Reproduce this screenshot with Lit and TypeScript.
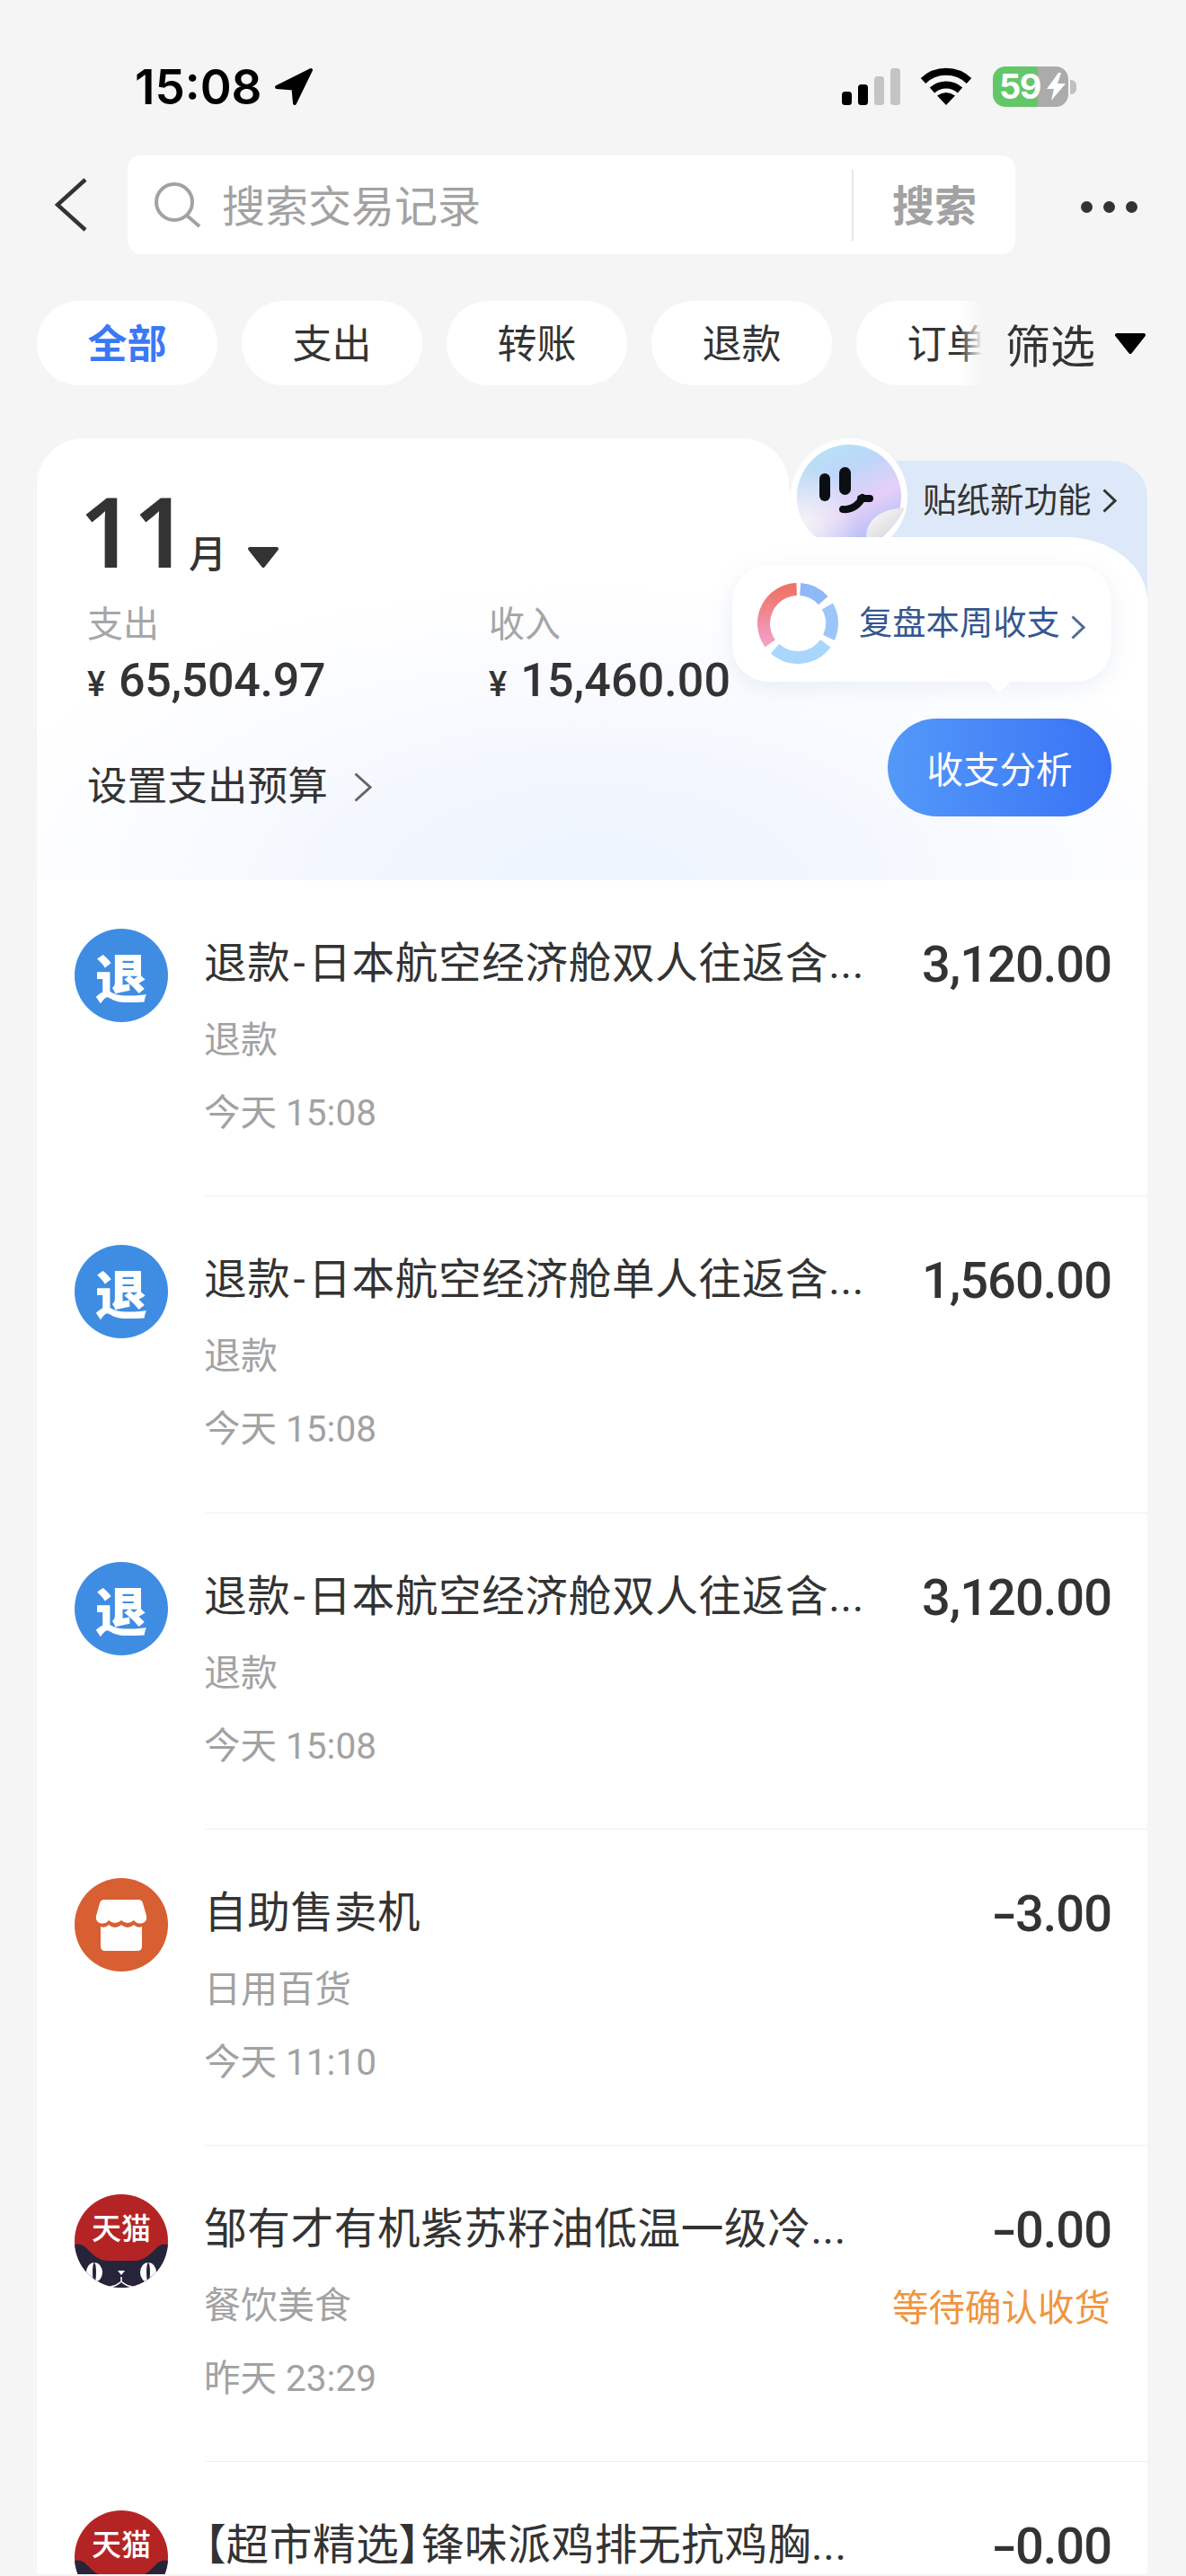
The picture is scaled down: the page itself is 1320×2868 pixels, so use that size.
import { LitElement, html, css, svg } from "lit";
import { customElement } from "lit/decorators.js";

type Row = { icon: "refund" | "store" | "tmall"; title: string; sub: string; time: string; amount: string; status?: string };

const ROWS: Row[] = [
  { icon: "refund", title: "退款-日本航空经济舱双人往返含...", sub: "退款", time: "今天 15:08", amount: "3,120.00" },
  { icon: "refund", title: "退款-日本航空经济舱单人往返含...", sub: "退款", time: "今天 15:08", amount: "1,560.00" },
  { icon: "refund", title: "退款-日本航空经济舱双人往返含...", sub: "退款", time: "今天 15:08", amount: "3,120.00" },
  { icon: "store", title: "自助售卖机", sub: "日用百货", time: "今天 11:10", amount: "-3.00" },
  { icon: "tmall", title: "邹有才有机紫苏籽油低温一级冷...", sub: "餐饮美食", time: "昨天 23:29", amount: "-0.00", status: "等待确认收货" },
  { icon: "tmall", title: "【超市精选】锋味派鸡排无抗鸡胸...", sub: "餐饮美食", time: "昨天 23:29", amount: "-0.00" },
];

const CHIPS = ["全部", "支出", "转账", "退款", "订单"];

function arc(cx: number, cy: number, r: number, a0: number, a1: number) {
  const p = (a: number) => {
    const t = ((a - 90) * Math.PI) / 180;
    return `${(cx + r * Math.cos(t)).toFixed(2)} ${(cy + r * Math.sin(t)).toFixed(2)}`;
  };
  const large = Math.abs(a1 - a0) > 180 ? 1 : 0;
  return `M${p(a0)} A${r} ${r} 0 ${large} 1 ${p(a1)}`;
}

const chev = (w: number, h: number, cls: string) => html`<svg class=${cls} width=${w} height=${h} viewBox="0 0 ${w} ${h}" fill="none"><path d="M1.5 1.5 L${w - 2} ${h / 2} L1.5 ${h - 1.5}" stroke="currentColor" stroke-width="3"/></svg>`;

const withDash = (t: string) => {
  const i = t.indexOf("-");
  if (i < 0) return t;
  return html`${t.slice(0, i)}<span class="dash">-</span>${t.slice(i + 1)}`;
};

@customElement("app-root")
export class AppRoot extends LitElement {
  static styles = css`
    :host { display: block; width: 1320px; height: 2868px; overflow: hidden; background: #f5f5f5; font-family: Roboto, "Noto Sans CJK SC", sans-serif; color: #333; }
    .status { height: 173px; padding: 0 122px 0 150px; box-sizing: border-box; display: flex; justify-content: space-between; align-items: flex-start; }
    .st-left { display: flex; margin-top: 74px; height: 46px; align-items: center; gap: 13px; }
    .time { font: 600 53px/46px Inter, sans-serif; color: #000; }
    .st-right { display: flex; margin-top: 74px; align-items: flex-start; }
    .signal { display: flex; align-items: flex-end; gap: 7px; height: 43px; margin-right: 22px; }
    .bar { width: 11px; border-radius: 3.5px; background: #000; }
    .bar.b1 { height: 15px; } .bar.b2 { height: 23px; }
    .bar.b3 { height: 32px; background: #c4c4c4; } .bar.b4 { height: 41px; background: #c4c4c4; }
    .wifi { margin: 1px 23px 0 0; display: block; }
    .battery { position: relative; width: 84px; height: 45px; border-radius: 14px; background: linear-gradient(to right, #63c76a 0 50px, #ababab 50px); display: flex; align-items: center; padding-left: 7px; box-sizing: border-box; color: #fff; font: 700 38px/45px Inter, sans-serif; letter-spacing: -1.5px; }
    .battery .bolt { position: absolute; left: 59px; top: 7px; }
    .nub { width: 7px; height: 16px; margin: 15px 0 0 2px; background: #c0c0c0; border-radius: 0 6px 6px 0; }

    .searchrow { display: flex; align-items: center; height: 110px; }
    .back { width: 142px; flex: none; padding-left: 61px; box-sizing: border-box; color: #333; display: flex; }
    .box { width: 988px; height: 110px; background: #fff; border-radius: 15px; display: flex; align-items: center; position: relative; }
    .sicon { margin-left: 30px; flex: none; }
    .ph { margin-left: 23px; padding-top: 5px; font-size: 48px; line-height: 48px; color: #a2a2a2; flex: 1; }
    .sep { width: 2px; height: 79px; background: #e6e6e6; }
    .sbtn { width: 180px; padding-top: 3px; text-align: center; font-size: 47px; line-height: 48px; font-weight: 700; color: #a2a2a2; }
    .dots { display: flex; gap: 12px; margin-left: 73px; margin-top: 4px; }
    .dots i { width: 13px; height: 13px; border-radius: 50%; background: #333; }

    .chips { position: relative; display: flex; gap: 27px; margin-top: 52px; height: 94px; padding-left: 41px; overflow: hidden; }
    .chip { flex: none; width: 201px; height: 94px; padding-bottom: 5px; box-sizing: border-box; border-radius: 47px; background: #fff; display: flex; align-items: center; justify-content: center; font-size: 44px; color: #333; }
    .chip.on { color: #3b78f6; font-weight: 700; }
    .filter { position: absolute; right: 0; top: 0; bottom: 0; width: 252px; background: linear-gradient(to right, rgba(245,245,245,0), #f5f5f5 25px); display: flex; align-items: center; box-sizing: border-box; padding-left: 51px; font-size: 50px; color: #333; }
    .filter svg { margin-left: 21px; }

    .panel { position: relative; margin: 59px 43px 0 41px; height: 2378px; overflow: hidden; background: transparent; }
    .summary { position: relative; height: 492px; }
    .tab { position: absolute; left: 900px; top: 25px; width: 336px; height: 200px; background: #dde9f9; border-radius: 0 40px 0 0; }
    .shape { position: absolute; inset: 0; display: block; }
    .sticker { position: absolute; left: 838px; top: -1px; display: block; }
    .tablabel { position: absolute; left: 986px; top: 50px; display: flex; align-items: center; font-size: 37.5px; line-height: 38px; color: #333; white-space: nowrap; }
    .tablabel svg { margin-left: 12px; color: #333; }
    .body { position: relative; padding: 54px 40px 0 56px; }
    .month { display: flex; align-items: baseline; height: 108px; }
    .mnum { font-family: "Noto Sans", sans-serif; font-size: 108px; line-height: 108px; font-weight: 600; color: #333; letter-spacing: -1.8px; margin: -5px 0 0 -9px; }
    .munit { font-size: 42px; line-height: 42px; font-weight: 500; margin-left: 2px; }
    .month svg { margin-left: 23px; align-self: flex-end; margin-bottom: 17px; }
    .stats { display: flex; margin-top: 26px; }
    .stat { width: 447px; }
    .lbl { font-size: 40px; line-height: 40px; color: #a6a6a6; }
    .val { margin-top: 16px; display: flex; align-items: baseline; height: 52px; font-size: 52px; line-height: 52px; font-weight: 500; color: #333; letter-spacing: -.3px; }
    .val.wide { letter-spacing: .1px; }
    .yen { font-size: 38px; line-height: 38px; font-weight: 500; margin-right: 15px; }
    .actions { display: flex; justify-content: space-between; margin-top: 16px; }
    .budget { display: flex; align-items: center; margin-top: 54px; height: 44px; font-size: 44.4px; line-height: 44px; letter-spacing: .3px; color: #333; }
    .budget svg { margin-left: 29px; color: #666; }
    .btn { width: 249px; height: 109px; border-radius: 55px; background: linear-gradient(to right, #5499f9, #3973f5); color: #fff; display: flex; align-items: center; justify-content: center; font-size: 40.5px; }
    .tip { position: absolute; left: 774px; top: 141px; width: 422px; height: 130px; background: #fff; border-radius: 40px; box-shadow: 0 6px 26px rgba(90,120,170,.12); display: flex; align-items: center; box-sizing: border-box; padding-left: 28px; color: #35568f; font-size: 37.3px; white-space: nowrap; }
    .tip .donut { flex: none; }
    .tip .ttxt { margin-left: 23px; line-height: 38px; }
    .tip .tchev { margin-left: 12px; color: #4f6b9c; position: relative; top: 4px; }
    .caret { position: absolute; left: 286px; top: 116px; width: 22px; height: 22px; background: #fff; transform: rotate(45deg); border-radius: 0 0 4px 0; }

    .list { background: #fff; }
    .row { display: flex; height: 352.3px; box-sizing: border-box; }
    .ic { flex: none; width: 104px; height: 104px; margin: 54px 42px 0 42px; border-radius: 50%; display: flex; align-items: center; justify-content: center; position: relative; overflow: hidden; }
    .ic.refund { background: #3f8de3; color: #fff; font-size: 58px; font-weight: 900; font-family: "Noto Sans CJK SC", sans-serif; line-height: 58px; }
    .ic.store { background: #d85f32; }
    .ic.tmall svg, .ic.store svg { display: block; }
    .main { flex: 1; display: flex; justify-content: space-between; border-bottom: 1.5px solid #f0f0f2; padding-right: 40px; min-width: 0; }
    .row:last-child .main { border-bottom: none; }
    .left { padding-top: 69px; margin-left: -2px; min-width: 0; }
    .title { font-size: 47.6px; line-height: 48px; letter-spacing: .65px; color: #333; white-space: nowrap; font-feature-settings: "palt"; }
    .dash { margin: 0 3px; }
    .sub { margin-top: 41px; font-size: 41px; line-height: 40px; color: #a2a2a2; }
    .when { margin-top: 41px; font-size: 40.5px; line-height: 40px; color: #a2a2a2; white-space: nowrap; }
    .right { padding-top: 66px; text-align: right; }
    .amt { font-size: 56px; line-height: 56px; font-weight: 500; color: #333; letter-spacing: -1px; }
    .minus { display: inline-block; transform: scaleX(1.45); margin-right: 4px; }
    .state { margin-top: 39px; margin-right: 1px; font-size: 40.5px; line-height: 40px; color: #f0953f; white-space: nowrap; }
  `;

  private icon(kind: Row["icon"]) {
    if (kind === "refund") return html`<div class="ic refund">退</div>`;
    if (kind === "store")
      return html`<div class="ic store"><svg width="104" height="104" viewBox="0 0 104 104">
        <path fill="#fff" d="M33 24 H71 Q75 24 76 28 L80 42 Q81 48 76 50 Q70 52 66 47 Q59 53 52 47 Q45 53 38 47 Q34 52 28 50 Q23 48 24 42 L28 28 Q29 24 33 24 Z"/>
        <path fill="#fff" d="M29 54 Q34 56 38 52 Q45 58 52 52 Q59 58 66 52 Q70 56 75 54 V76 Q75 81 70 81 H34 Q29 81 29 76 Z"/>
      </svg></div>`;
    return html`<div class="ic tmall"><svg width="104" height="104" viewBox="0 0 104 104">
      <rect width="104" height="104" fill="#b52424"/>
      <path fill="#26243a" d="M0 56 C3 55 7 55 11 58 C20 66 24 74 40 74 H64 C80 74 84 66 93 58 C97 55 101 55 104 56 V104 H0 Z"/>
      <ellipse cx="22" cy="87" rx="9" ry="11" fill="#fff"/><ellipse cx="22" cy="87" rx="2" ry="11" fill="#26243a"/>
      <ellipse cx="82" cy="87" rx="9" ry="11" fill="#fff"/><ellipse cx="82" cy="87" rx="2" ry="11" fill="#26243a"/>
      <path fill="#fff" d="M48 85 H56 L52 90 Z"/>
      <path stroke="#fff" stroke-width="1.6" fill="none" d="M52 92 V97 M52 97 Q46 103 38 103 M52 97 Q58 103 66 103"/>
      <text x="52" y="50" text-anchor="middle" fill="#fff" font-size="33" font-weight="500" font-family="'Noto Sans CJK SC', sans-serif">天猫</text>
    </svg></div>`;
  }

  private sticker() {
    return html`<svg class="sticker" width="132" height="111" viewBox="0 0 132 111">
      <defs>
        <linearGradient id="stk" x1="0.2" y1="0" x2="0.65" y2="1">
          <stop offset="0" stop-color="#b8e3f4"/><stop offset=".3" stop-color="#bdd6f9"/>
          <stop offset=".62" stop-color="#e6cff9"/><stop offset=".85" stop-color="#c0c4f6"/><stop offset="1" stop-color="#b4bbf4"/>
        </linearGradient>
        <radialGradient id="stk2" cx=".05" cy=".75" r=".55"><stop offset="0" stop-color="#f4f4f6"/><stop offset="1" stop-color="#f4f4f6" stop-opacity="0"/></radialGradient>
        <linearGradient id="curl" x1="0" y1="0" x2="1" y2="1"><stop offset="0" stop-color="#fff"/><stop offset="1" stop-color="#d0d0d4"/></linearGradient>
      </defs>
      <circle cx="66" cy="66" r="65" fill="#fff"/>
      <circle cx="66" cy="66" r="58" fill="url(#stk)"/>
      <circle cx="66" cy="66" r="58" fill="url(#stk2)"/>
      <path d="M85 112 C85 92 100 80 128 78 C124 90 112 104 100 112 Z" fill="url(#curl)"/>
      <rect x="33" y="40" width="12" height="31" rx="6" fill="#0b0f14"/>
      <rect x="55" y="33" width="13" height="31" rx="6.5" fill="#0b0f14"/>
      <path d="M59 80 C68 81 76 76 81 67 M79 68 L89 68" stroke="#0b0f14" stroke-width="8" stroke-linecap="round" fill="none"/>
    </svg>`;
  }

  private amount(a: string) {
    return a.startsWith("-") ? html`<span class="minus">-</span>${a.slice(1)}` : a;
  }

  render() {
    const C = 45, R = 38;
    return html`
      <div class="status">
        <div class="st-left">
          <span class="time">15:08</span>
          <svg width="44" height="44" viewBox="0 0 44 44"><path d="M3 22 L41 3 L23 40 L21.5 23.5 Z" fill="#000" stroke="#000" stroke-width="4" stroke-linejoin="round"/></svg>
        </div>
        <div class="st-right">
          <div class="signal"><i class="bar b1"></i><i class="bar b2"></i><i class="bar b3"></i><i class="bar b4"></i></div>
          <svg class="wifi" width="58" height="42" viewBox="0 0 58 42" fill="none">
            <path d="M3.5 15 A37 37 0 0 1 54.5 15" stroke="#000" stroke-width="8"/>
            <path d="M13.5 25.5 A23 23 0 0 1 44.5 25.5" stroke="#000" stroke-width="8"/>
            <path d="M29 42 L19 31.5 Q29 24.5 39 31.5 Z" fill="#000"/>
          </svg>
          <div class="battery">59
            <svg class="bolt" width="23" height="31" viewBox="0 0 23 31"><path d="M14 0 L1 18 H9 L6 31 L22 12 H13 L17 0 Z" fill="#fff"/></svg>
          </div>
          <div class="nub"></div>
        </div>
      </div>

      <div class="searchrow">
        <div class="back"><svg width="36" height="60" viewBox="0 0 36 60" fill="none"><path d="M34 2 L3 30 L34 58" stroke="#333" stroke-width="4.5" /></svg></div>
        <div class="box">
          <svg class="sicon" width="52" height="52" viewBox="0 0 52 52" fill="none"><circle cx="22" cy="23" r="20" stroke="#a2a2a2" stroke-width="4"/><path d="M36 38 L50 50" stroke="#a2a2a2" stroke-width="4"/></svg>
          <span class="ph">搜索交易记录</span>
          <i class="sep"></i>
          <span class="sbtn">搜索</span>
        </div>
        <div class="dots"><i></i><i></i><i></i></div>
      </div>

      <div class="chips">
        ${CHIPS.map((c, i) => html`<div class="chip ${i === 0 ? "on" : ""}">${c}</div>`)}
        <div class="filter">筛选<svg width="36" height="25" viewBox="0 0 36 25"><path d="M3 3 H33 L18 22 Z" fill="#000" stroke="#000" stroke-width="4" stroke-linejoin="round"/></svg></div>
      </div>

      <div class="panel">
        <div class="summary">
          <div class="tab"></div>
          <svg class="shape" width="1236" height="492" viewBox="0 0 1236 492">
            <defs>
              <radialGradient id="bg" gradientUnits="userSpaceOnUse" cx="0" cy="0" r="1" gradientTransform="translate(620 492) scale(720 330)">
                <stop offset="0" stop-color="#edf4fe"/><stop offset=".4" stop-color="#f3f7fe"/><stop offset=".75" stop-color="#fbfcff"/><stop offset="1" stop-color="#fff"/>
              </radialGradient>
            </defs>
            <path d="M0 492 V52 A52 52 0 0 1 52 0 H785 A52 52 0 0 1 837 52 V60 H900 V110 H1145 A91 72 0 0 1 1236 182 V492 Z" fill="url(#bg)"/>
          </svg>
          ${this.sticker()}
          <div class="tablabel">贴纸新功能${chev(16, 27, "")}</div>
          <div class="body">
            <div class="month"><span class="mnum">11</span><span class="munit">月</span>
              <svg width="36" height="25" viewBox="0 0 36 25"><path d="M3 3 H33 L18 22 Z" fill="#333" stroke="#333" stroke-width="4" stroke-linejoin="round"/></svg>
            </div>
            <div class="stats">
              <div class="stat"><div class="lbl">支出</div><div class="val"><span class="yen">¥</span>65,504.97</div></div>
              <div class="stat"><div class="lbl">收入</div><div class="val wide"><span class="yen">¥</span>15,460.00</div></div>
            </div>
            <div class="actions">
              <div class="budget">设置支出预算${chev(20, 33, "")}</div>
              <div class="btn">收支分析</div>
            </div>
          </div>
          <div class="tip">
            <svg class="donut" width="90" height="90" viewBox="0 0 90 90" fill="none" stroke-width="14">
              <defs><linearGradient id="rd" x1="0" y1="0" x2="0" y2="1"><stop offset="0" stop-color="#ee7468"/><stop offset="1" stop-color="#f3a0c8"/></linearGradient></defs>
              ${svg`<path d=${arc(C, C, R, 234, 358)} stroke="url(#rd)" stroke-linejoin="round"/>
              <path d=${arc(C, C, R, 4, 48)} stroke="#8fb8f6"/>
              <path d=${arc(C, C, R, 60, 115)} stroke="#9cc6f7"/>
              <path d=${arc(C, C, R, 126, 222)} stroke="#a9d6fd"/>`}
            </svg>
            <span class="ttxt">复盘本周收支</span>${chev(16, 27, "tchev")}
            <i class="caret"></i>
          </div>
        </div>
        <div class="list">
          ${ROWS.map((r) => html`<div class="row">
            ${this.icon(r.icon)}
            <div class="main">
              <div class="left">
                <div class="title">${withDash(r.title)}</div>
                <div class="sub">${r.sub}</div>
                <div class="when">${r.time}</div>
              </div>
              <div class="right">
                <div class="amt">${this.amount(r.amount)}</div>
                ${r.status ? html`<div class="state">${r.status}</div>` : ""}
              </div>
            </div>
          </div>`)}
        </div>
      </div>
    `;
  }
}
